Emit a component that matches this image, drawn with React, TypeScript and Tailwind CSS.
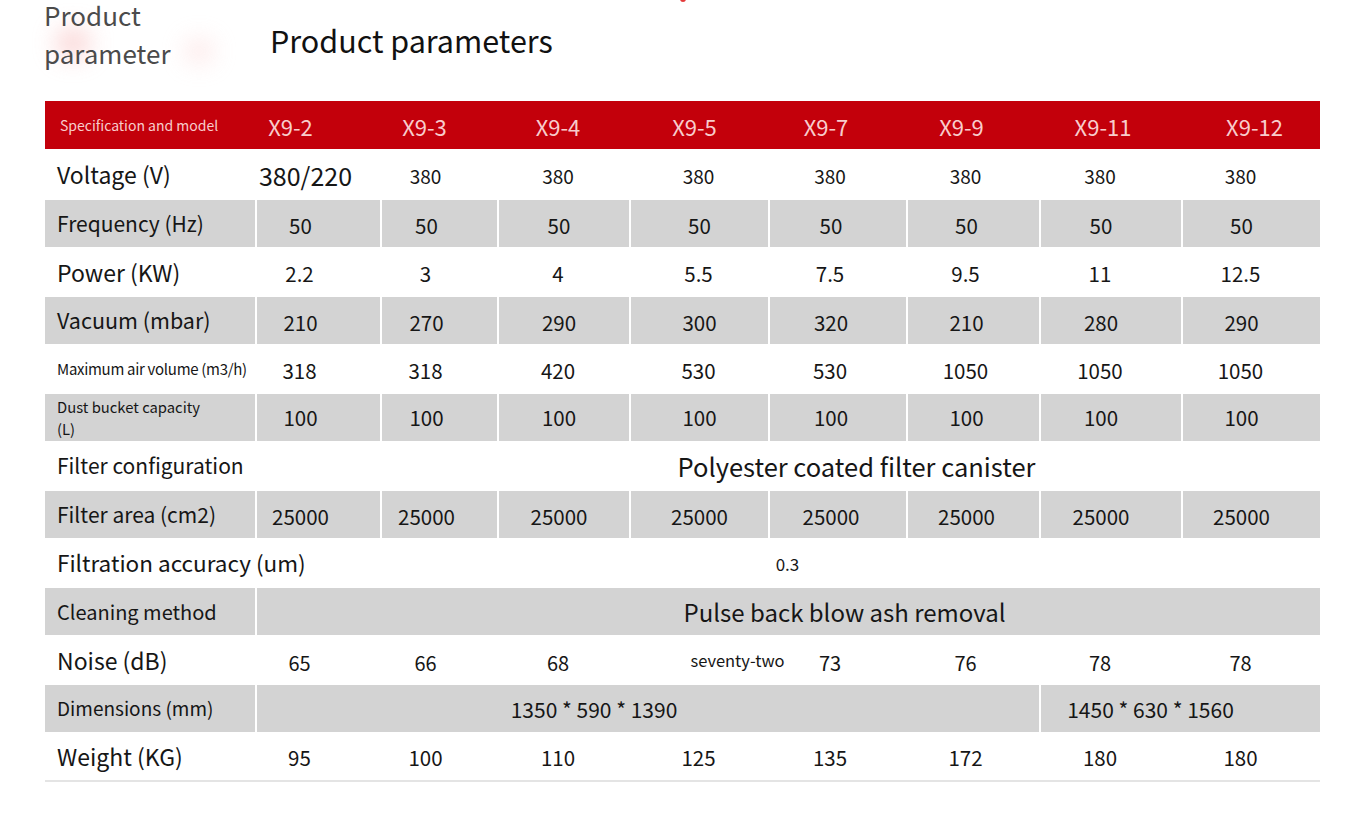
import React from "react";

const FONT = { fontFamily: '"Noto Sans CJK SC", "Noto Sans", sans-serif' };

const models = ["X9-2", "X9-3", "X9-4", "X9-5", "X9-7", "X9-9", "X9-11", "X9-12"];

// nudges so numbers sit where the original puts them (a bit left of centre)
const valuePad = ["pr-[36px]", "pr-[26px]", "pr-[10px]", "pr-0", "pr-[14px]", "pr-[14px]", "pr-[20px]", "pr-[20px]"];
const headPad = ["pr-[54px]", "pr-[28px]", "pr-[10px]", "pr-[8px]", "pr-[22px]", "pr-[22px]", "pr-[14px]", "pl-[8px]"];

const cols = "grid grid-cols-[210px_125px_117px_132px_139px_138px_133px_142px_139px]";

interface SpecRow {
  label: React.ReactNode;
  labelClass: string;
  gray: boolean;
  height: string;
  values?: string[];
  valueClass?: string;
  custom?: React.ReactNode;
}

const rows: SpecRow[] = [
  {
    label: "Voltage (V)",
    labelClass: "text-[23px]",
    gray: false,
    height: "h-[51px]",
    custom: (
      <>
        <div className="flex items-center justify-center pr-[24px] pt-[2px] text-[25px]">380/220</div>
        {["380", "380", "380", "380", "380", "380", "380"].map((v, i) => (
          <div key={i} className={`flex items-center justify-center pt-[3px] text-[19px] ${valuePad[i + 1]}`}>
            {v}
          </div>
        ))}
      </>
    ),
  },
  { label: "Frequency (Hz)", labelClass: "text-[21px]", gray: true, height: "h-[47px]", values: ["50", "50", "50", "50", "50", "50", "50", "50"], valueClass: "pt-[3px]" },
  { label: "Power (KW)", labelClass: "text-[23px]", gray: false, height: "h-[50px]", values: ["2.2", "3", "4", "5.5", "7.5", "9.5", "11", "12.5"], valueClass: "text-[19px] pt-[3px]" },
  { label: "Vacuum (mbar)", labelClass: "text-[21.5px]", gray: true, height: "h-[47px]", values: ["210", "270", "290", "300", "320", "210", "280", "290"], valueClass: "pt-[3px]" },
  { label: "Maximum air volume (m3/h)", labelClass: "text-[15px] tracking-[-0.3px] whitespace-nowrap", gray: false, height: "h-[50px]", values: ["318", "318", "420", "530", "530", "1050", "1050", "1050"], valueClass: "pt-[3px]" },
  {
    label: (
      <span className="leading-[22px]">
        Dust bucket capacity
        <br />
        (L)
      </span>
    ),
    labelClass: "text-[14.8px]",
    gray: true,
    height: "h-[47px]",
    values: ["100", "100", "100", "100", "100", "100", "100", "100"],
  },
  {
    label: "Filter configuration",
    labelClass: "text-[21px] whitespace-nowrap",
    gray: false,
    height: "h-[50px]",
    custom: <div className="col-span-8 flex items-center justify-center pl-[138px] text-[25.5px]">Polyester coated filter canister</div>,
  },
  { label: "Filter area (cm2)", labelClass: "text-[21px]", gray: true, height: "h-[47px]", values: ["25000", "25000", "25000", "25000", "25000", "25000", "25000", "25000"], valueClass: "pt-[3px]" },
  {
    label: "Filtration accuracy (um)",
    labelClass: "text-[22.5px] whitespace-nowrap",
    gray: false,
    height: "h-[50px]",
    custom: <div className="col-span-8 flex items-center justify-center pt-[2px] text-[17px]">0.3</div>,
  },
  {
    label: "Cleaning method",
    labelClass: "text-[20px]",
    gray: true,
    height: "h-[47px]",
    custom: <div className="col-span-8 flex items-center justify-center border-l-2 border-white pl-[112px] text-[24px]">Pulse back blow ash removal</div>,
  },
  {
    label: "Noise (dB)",
    labelClass: "text-[23px]",
    gray: false,
    height: "h-[50px]",
    custom: (
      <>
        {["65", "66", "68"].map((v, i) => (
          <div key={i} className={`flex items-center justify-center pt-[5px] text-[20px] ${valuePad[i]}`}>
            {v}
          </div>
        ))}
        <div className="flex items-center justify-center pl-[78px] text-[16.5px] whitespace-nowrap">seventy-two</div>
        {["73", "76", "78", "78"].map((v, i) => (
          <div key={i} className={`flex items-center justify-center pt-[5px] text-[20px] ${valuePad[i + 4]}`}>
            {v}
          </div>
        ))}
      </>
    ),
  },
  {
    label: "Dimensions (mm)",
    labelClass: "text-[19px]",
    gray: true,
    height: "h-[47px]",
    custom: (
      <>
        <div className="col-span-6 flex items-center justify-center border-l-2 border-white pt-[2px] pr-[108px] text-[21px]">1350 * 590 * 1390</div>
        <div className="col-span-2 flex items-center justify-center border-l-2 border-white pt-[2px] pr-[60px] text-[21px]">1450 * 630 * 1560</div>
      </>
    ),
  },
  { label: "Weight (KG)", labelClass: "text-[23px]", gray: false, height: "h-[48px]", values: ["95", "100", "110", "125", "135", "172", "180", "180"], valueClass: "pt-[3px]" },
];

export default function App() {
  return (
    <div className="relative h-[815px] w-[1353px] overflow-hidden bg-white text-[#161616]" style={FONT}>
      {/* soft pink smudges behind the small title */}
      <div className="absolute left-[56px] top-[28px] h-[30px] w-[34px] rounded-full bg-[#f7b8b8] opacity-60 blur-md"></div>
      <div className="absolute left-[186px] top-[40px] h-[22px] w-[26px] rounded-full bg-[#fbd2d2] opacity-60 blur-md"></div>
      <div className="absolute left-[680px] top-[-4px] h-[6px] w-[6px] rounded-full bg-[#e43b3b]"></div>

      {/* title */}
      <div className="relative flex h-[101px] items-start">
        <div className="w-[270px] pl-[44px] text-[26px] leading-[38px] text-[#4b4b4b]">
          <div className="-mt-[4px]">Product</div>
          <div>parameter</div>
        </div>
        <div className="pt-[18px] text-[30.5px] leading-[44px] text-[#111]">Product parameters</div>
      </div>

      {/* table */}
      <div className="ml-[45px] w-[1275px]">
        <div className={`${cols} h-[48px] bg-[#c3000b] text-[#f8cccc]`}>
          <div className="flex items-center pl-[15px] text-[14px]">Specification and model</div>
          {models.map((m, i) => (
            <div key={m} className={`flex items-center justify-center pt-[2px] text-[22px] ${headPad[i]}`}>
              {m}
            </div>
          ))}
        </div>

        <div className="border-x-2 border-b-2 border-[#e4e4e4]">
          {rows.map((r, ri) => (
            <div key={ri} className={`${cols} ${r.height} ${r.gray ? "bg-[#d3d3d3]" : "bg-white"} -ml-[2px] -mr-[2px]`}>
              <div className={`flex items-center pl-[12px] ${r.labelClass}`}>{r.label}</div>
              {r.custom
                ? r.custom
                : r.values!.map((v, i) => (
                    <div
                      key={i}
                      className={`flex items-center justify-center text-[20.5px] ${r.gray ? "border-l-2 border-white" : ""} ${valuePad[i]} ${r.valueClass ?? ""}`}
                    >
                      {v}
                    </div>
                  ))}
            </div>
          ))}
        </div>
      </div>
    </div>
  );
}
